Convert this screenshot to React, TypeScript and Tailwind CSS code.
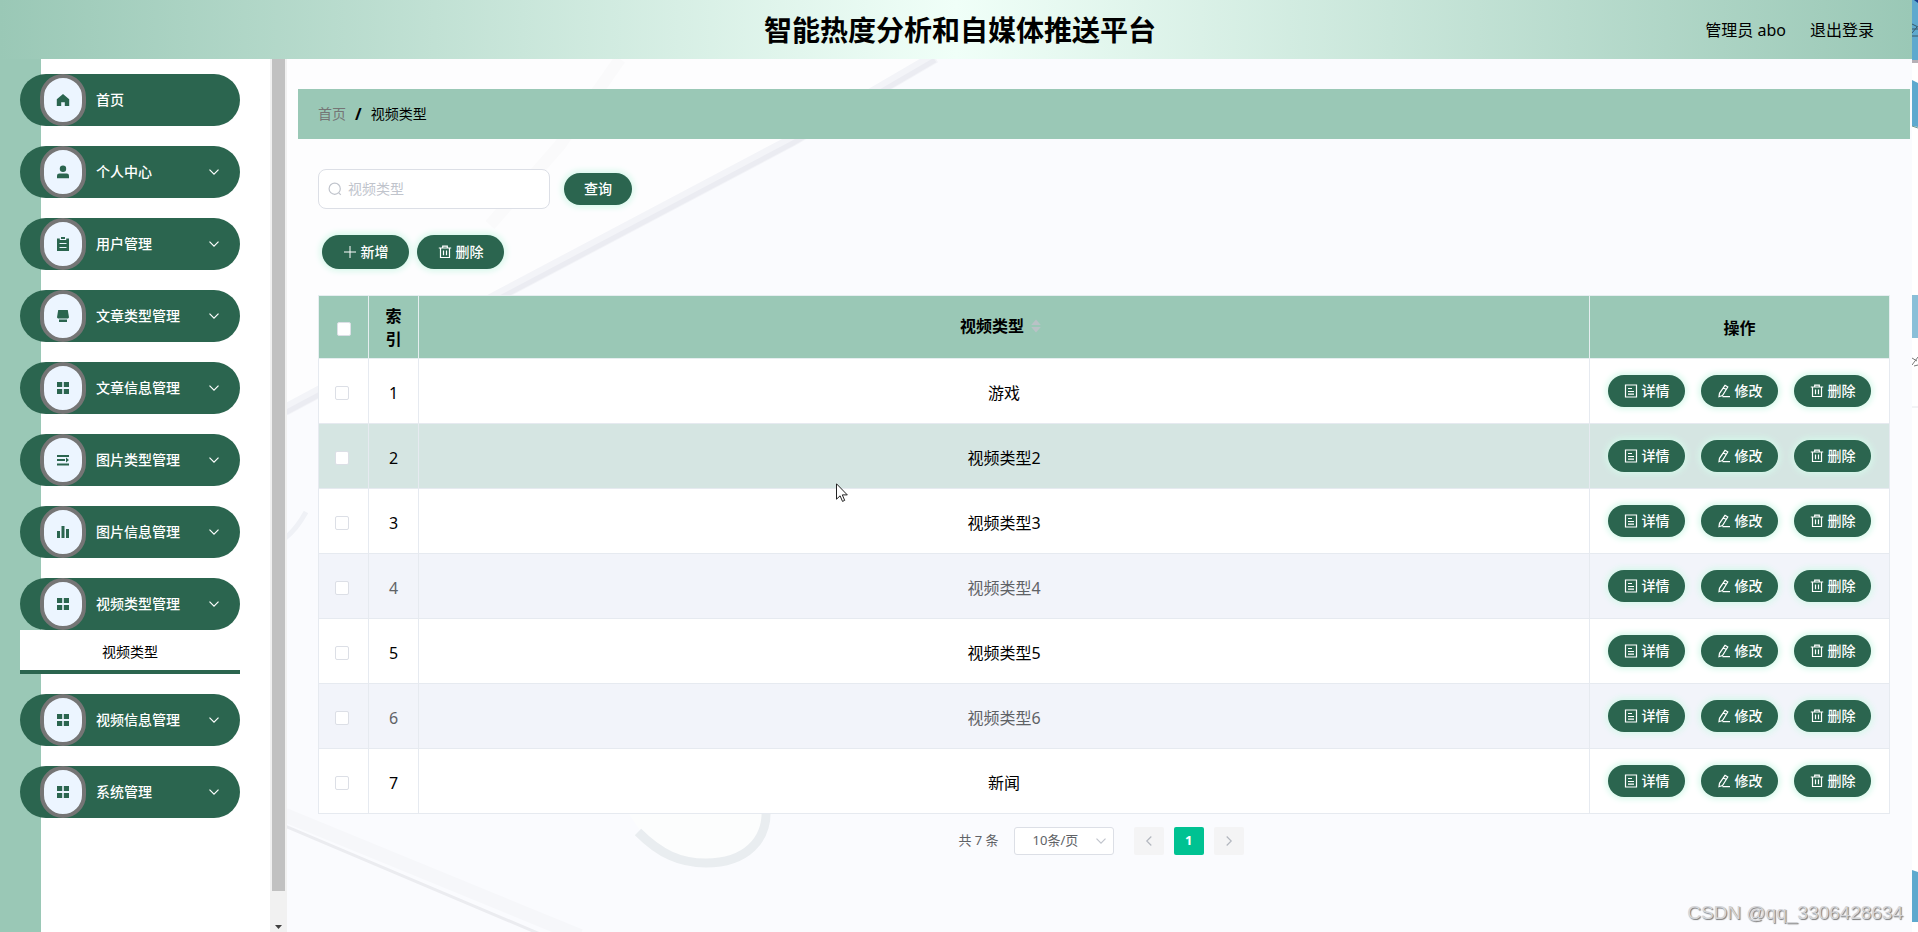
import { useState, type ReactNode } from "react";

type IconProps = { className?: string };

const HomeIcon = () => (
  <svg viewBox="0 0 14 14" className="h-[14px] w-[14px]" fill="currentColor" aria-hidden="true">
    <path d="M7 1 .8 6.2V13h4.4V9.2h3.6V13h4.4V6.2z" />
  </svg>
);
const UserIcon = () => (
  <svg viewBox="0 0 14 14" className="h-[14px] w-[14px]" fill="currentColor" aria-hidden="true">
    <circle cx="7" cy="3.8" r="3.2" />
    <path d="M1 13.2v-2.4A2.3 2.3 0 0 1 3.300 8.500h7.400A2.300 2.300 0 0 1 13 10.800v2.400z" />
  </svg>
);
const OrderIcon = () => (
  <svg viewBox="0 0 14 14" className="h-[14px] w-[14px]" aria-hidden="true">
    <path d="M1 1.500h2.800v1.500h6.400V1.500H13V14H1z" fill="currentColor" />
    <path d="M5 0h4v2H5z" fill="currentColor" />
    <path d="M3.500 6.500h7M3.500 10.500h7" stroke="#ecf5ff" strokeWidth="1" />
  </svg>
);
const TicketIcon = () => (
  <svg viewBox="0 0 14 14" className="h-[14px] w-[14px]" fill="currentColor" aria-hidden="true">
    <path d="M2.200 1h9.600l1.200 7.500-1 1H2l-1-1z" />
    <path d="M3 10.500h8V13H3z" />
  </svg>
);
const MenuIcon = () => (
  <svg viewBox="0 0 14 14" className="h-[14px] w-[14px]" fill="currentColor" aria-hidden="true">
    <path d="M1 1h5.200v5H1zM7.800 1H13v5H7.800zM1 8h5.200v5H1zM7.800 8H13v5H7.800z" />
  </svg>
);
const UnfoldIcon = () => (
  <svg viewBox="0 0 14 14" className="h-[14px] w-[14px]" fill="currentColor" aria-hidden="true">
    <path d="M1 2h12v2H1zM1 6h8v2H1zM1 10.500h12v2H1zM10 4.500 13 7l-3 2.500z" />
  </svg>
);
const DataIcon = () => (
  <svg viewBox="0 0 14 14" className="h-[14px] w-[14px]" fill="currentColor" aria-hidden="true">
    <path d="M1 6h3v7H1zM5.500 1h3v12h-3zM10 4h3v9h-3z" />
  </svg>
);
const ChevronIcon = ({ className }: IconProps) => (
  <svg viewBox="0 0 12 12" className={className} fill="none" stroke="currentColor" strokeWidth="1.200" aria-hidden="true">
    <path d="m1.500 3.700 4.500 4.500 4.500-4.500" />
  </svg>
);
const SearchIcon = ({ className }: IconProps) => (
  <svg viewBox="0 0 14 14" className={className} fill="none" stroke="currentColor" strokeWidth="1.200" aria-hidden="true">
    <circle cx="6.700" cy="6.700" r="5.600" />
    <path d="m10.800 10.800 2 2" />
  </svg>
);
const PlusIcon = () => (
  <svg viewBox="0 0 14 14" className="h-[14px] w-[14px]" stroke="currentColor" aria-hidden="true">
    <path d="M7 1v12M1 7h12" />
  </svg>
);
const TrashIcon = () => (
  <svg viewBox="0 0 14 14" className="h-[14px] w-[14px]" fill="none" stroke="currentColor" strokeWidth="1.200" aria-hidden="true">
    <path d="M.8 3h12.400M2.500 3v9.500h9V3M4.700 3V1.200h4.600V3M5.500 5.500v4.700M8.500 5.500v4.700" />
  </svg>
);
const DocIcon = () => (
  <svg viewBox="0 0 14 14" className="h-[14px] w-[14px]" fill="none" stroke="currentColor" strokeWidth="1.200" aria-hidden="true">
    <path d="M1.500 1h11v12h-11zM4 4.500h4M4 7.500h6M4 10.200h6" />
  </svg>
);
const EditIcon = () => (
  <svg viewBox="0 0 14 14" className="h-[14px] w-[14px]" fill="none" stroke="currentColor" strokeWidth="1.200" aria-hidden="true">
    <path d="M8 1.300 10.800 3 5.500 11.500 2 12.700l.5-3.400zM6.500 3.800 9.200 5.500M5.500 12.700H13" />
  </svg>
);

type MenuEntry = { label: string; icon: ReactNode; plain?: boolean; child?: string };

const menu: MenuEntry[] = [
  { label: "首页", icon: <HomeIcon />, plain: true },
  { label: "个人中心", icon: <UserIcon /> },
  { label: "用户管理", icon: <OrderIcon /> },
  { label: "文章类型管理", icon: <TicketIcon /> },
  { label: "文章信息管理", icon: <MenuIcon /> },
  { label: "图片类型管理", icon: <UnfoldIcon /> },
  { label: "图片信息管理", icon: <DataIcon /> },
  { label: "视频类型管理", icon: <MenuIcon />, child: "视频类型" },
  { label: "视频信息管理", icon: <MenuIcon /> },
  { label: "系统管理", icon: <MenuIcon /> },
];

const rows = ["游戏", "视频类型2", "视频类型3", "视频类型4", "视频类型5", "视频类型6", "新闻"];

function rowStyle(index: number) {
  if (index === 1) return "bg-[#d5e5e2] text-black";
  return index % 2 === 1 ? "bg-[#f2f4fa] text-[#606266]" : "bg-white text-black";
}

function PillButton({ icon, children, size }: { icon?: ReactNode; children: ReactNode; size: string }) {
  return (
    <button
      type="button"
      className={`flex items-center justify-center gap-1 rounded-full bg-[#2b654f] text-sm font-medium text-white shadow-[0_0_6px_2px_#d5f8ea] ${size}`}
    >
      {icon}
      {children}
    </button>
  );
}

function Sidebar() {
  return (
    <nav className="w-[270px] shrink-0 bg-[linear-gradient(to_right,#9ac8b6_41px,#ffffff_41px)] pt-[15px] pr-[30px] pl-5">
      <ul className="flex flex-col gap-5">
        {menu.map((item) => (
          <li key={item.label}>
            <a
              href="#"
              className="flex h-[52px] items-center rounded-full bg-[#2b654f] pr-5 pl-5 text-sm font-medium text-white"
            >
              <span className="flex h-[52px] w-[46px] items-center justify-center rounded-full border-4 border-[#757575] bg-[#ecf5ff] text-[#2b654f]">
                {item.icon}
              </span>
              <span className="flex-1 pl-[10px]">{item.label}</span>
              {!item.plain && <ChevronIcon className="h-3 w-3" />}
            </a>
            {item.child && (
              <a
                href="#"
                className="flex h-11 items-center justify-center border-b-4 border-[#2b654f] bg-white pt-[3px] text-sm text-black"
              >
                {item.child}
              </a>
            )}
          </li>
        ))}
      </ul>
    </nav>
  );
}

function ScrollTrack() {
  return (
    <div className="flex w-[17px] shrink-0 flex-col items-center bg-[#f1f1f1]">
      <div className="w-[13px] flex-1 bg-[#c1c1c1]" />
      <div className="flex h-[41px] items-end justify-center pb-[3px]">
        <svg viewBox="0 0 7 4" className="h-1 w-[7px]" fill="#404040" aria-hidden="true">
          <path d="M0 0h7L3.500 4z" />
        </svg>
      </div>
    </div>
  );
}

function Backdrop() {
  return (
    <svg
      viewBox="287 59 1625 873"
      preserveAspectRatio="xMinYMin slice"
      className="absolute inset-0 h-full w-full"
      fill="none"
      aria-hidden="true"
    >
      <path d="M287 59H935L793 140 500 295 287 405z" fill="#fdfdfe" />
      <path d="M935 57 793 140 500 295 285 410" stroke="#f3f4f8" strokeWidth="12" />
      <path d="M935 60 793 143 500 298 285 413" stroke="#ebecf2" strokeWidth="5" />
      <path d="M620 59 560 145 490 225" stroke="#fafafb" strokeWidth="12" />
      <path d="M285 538 Q296 530 306 512" stroke="#eff1f6" strokeWidth="5" />
      <path d="M285 815 580 936" stroke="#f6f7fa" strokeWidth="14" />
      <path d="M285 826 540 934" stroke="#ebecf0" strokeWidth="3" />
      <path d="M628 812C650 850 680 868 706 866 746 866 768 845 766 808" fill="#fcfdfd" />
      <path d="M638 832C660 854 680 863 706 863 746 863 768 840 766 808" stroke="#e9edf0" strokeWidth="9" />
    </svg>
  );
}

function EdgeStrip() {
  return (
    <div className="w-[6px] shrink-0 bg-white">
      <svg viewBox="0 0 6 932" className="w-full" aria-hidden="true">
        <path d="M0 0h6v60H0z" fill="#5ea9ce" />
        <path d="M2 0h4v3z" fill="#173f8f" />
        <path d="M0 24l6 3M0 29h6M0 33l5-6M0 36h6" stroke="#36586a" />
        <path d="M0 60h6v3H0z" fill="#b5b0b6" />
        <path d="M0 80l6 3v44l-6-1z" fill="#5ea9ce" />
        <path d="M0 126l6 2" stroke="#6f9a93" />
        <path d="M0 295h6v43H0z" fill="#8abfd8" />
        <path d="M0 358l5 3M6 357l-6 8M2 366l4-1" stroke="#777" />
        <path d="M0 407h6" stroke="#e5e8ec" />
        <path d="M0 870l6 2v50H0z" fill="#5ea9ce" />
      </svg>
    </div>
  );
}

function Content() {
  const [query, setQuery] = useState("");
  return (
    <main className="relative min-w-0 flex-1 bg-[#fafbfe]">
      <Backdrop />
      <div className="relative pt-[30px] pr-[2px] pl-[11px]">
        <ol className="flex h-[50px] items-center gap-[9px] bg-[#9ac8b6] pl-5 text-sm">
          <li>
            <a href="#" className="text-[#757575]">
              首页
            </a>
          </li>
          <li className="text-base font-bold">/</li>
          <li className="text-black">视频类型</li>
        </ol>

        <div className="pt-[30px] pr-5 pl-5">
          <form className="flex items-center gap-[14px]" onSubmit={(e) => e.preventDefault()}>
            <label className="flex h-10 w-[232px] items-center gap-[6px] rounded-lg border border-[#dcdfe6] bg-white px-[9px]">
              <SearchIcon className="h-[14px] w-[14px] shrink-0 text-[#c0c4cc]" />
              <input
                type="text"
                aria-label="视频类型"
                placeholder="视频类型"
                value={query}
                onChange={(e) => setQuery(e.target.value)}
                className="w-full min-w-0 text-sm outline-none placeholder:text-[#c0c4cc]"
              />
            </label>
            <PillButton size="h-8 w-[68px]">查询</PillButton>
          </form>

          <div className="flex gap-2 pt-[26px] pl-1">
            <PillButton size="h-[34px] w-[87px]" icon={<PlusIcon />}>
              新增
            </PillButton>
            <PillButton size="h-[34px] w-[87px]" icon={<TrashIcon />}>
              删除
            </PillButton>
          </div>

          <table className="mt-[26px] w-full table-fixed border-collapse text-center text-base [&_td]:border [&_td]:border-[#e6eaf0] [&_th]:border [&_th]:border-[#e6eef0]">
            <colgroup>
              <col className="w-[50px]" />
              <col className="w-[50px]" />
              <col />
              <col className="w-[300px]" />
            </colgroup>
            <thead className="bg-[#9ac8b6] text-black">
              <tr className="h-[63px]">
                <th>
                  <input
                    type="checkbox"
                    aria-label="全选"
                    className="mx-auto mt-1 block h-[14px] w-[14px] appearance-none rounded-xs border border-[#dcdfe6] bg-white"
                  />
                </th>
                <th className="px-[10px] pt-[2px] leading-[23px] font-bold">索引</th>
                <th className="font-bold">
                  <span className="inline-flex items-center pb-[2px]">
                    视频类型
                    <svg viewBox="0 0 24 14" className="h-[14px] w-6" fill="#b9c2c6" aria-hidden="true">
                      <path d="M12 .5 16.800 6H7.200zM7.200 8h9.600L12 13.500z" />
                    </svg>
                  </span>
                </th>
                <th className="pt-[2px] font-bold">操作</th>
              </tr>
            </thead>
            <tbody>
              {rows.map((name, index) => (
                <tr key={name} className={`h-[65px] ${rowStyle(index)}`}>
                  <td className="pr-1">
                    <input
                      type="checkbox"
                      aria-label={name}
                      className="mx-auto mt-1 block h-[14px] w-[14px] appearance-none rounded-xs border border-[#dcdfe6] bg-white"
                    />
                  </td>
                  <td className="pt-1">{index + 1}</td>
                  <td className="pt-1">{name}</td>
                  <td>
                    <div className="flex justify-center gap-4">
                      <PillButton size="h-8 w-[77px]" icon={<DocIcon />}>
                        详情
                      </PillButton>
                      <PillButton size="h-8 w-[77px]" icon={<EditIcon />}>
                        修改
                      </PillButton>
                      <PillButton size="h-8 w-[77px]" icon={<TrashIcon />}>
                        删除
                      </PillButton>
                    </div>
                  </td>
                </tr>
              ))}
            </tbody>
          </table>

          <div className="flex items-center justify-center pt-[13px] pr-[6px] text-[13px] text-[#606266]">
            <span>共 7 条</span>
            <div className="relative ml-[15px]">
              <select
                aria-label="每页条数"
                className="h-7 w-[100px] appearance-none rounded-[3px] border border-[#dcdfe6] bg-white pl-[18px] text-[13px] text-[#606266]"
              >
                <option>10条/页</option>
              </select>
              <ChevronIcon className="pointer-events-none absolute top-2 right-[7px] h-3 w-3 text-[#c0c4cc]" />
            </div>
            <div className="ml-5 flex gap-[10px] font-bold">
              <button
                type="button"
                aria-label="上一页"
                className="flex h-7 w-[30px] items-center justify-center rounded-[2px] bg-[#f4f4f5] text-[#b4b8c0]"
              >
                <ChevronIcon className="h-3 w-3 rotate-90" />
              </button>
              <button type="button" className="h-7 w-[30px] rounded-[2px] bg-[#00c292] text-white">
                1
              </button>
              <button
                type="button"
                aria-label="下一页"
                className="flex h-7 w-[30px] items-center justify-center rounded-[2px] bg-[#f4f4f5] text-[#b4b8c0]"
              >
                <ChevronIcon className="h-3 w-3 -rotate-90" />
              </button>
            </div>
          </div>
        </div>
      </div>

      <svg
        viewBox="0 0 12 20"
        className="pointer-events-none absolute top-[424px] left-[549px] h-5 w-3"
        fill="#fff"
        stroke="#222"
        aria-hidden="true"
      >
        <path d="M.5.800v15.400l3.600-3.400 2.400 5.600 2.200-1-2.400-5.500h5z" />
      </svg>
      <p className="pointer-events-none absolute right-[9px] bottom-[7px] font-['Liberation_Sans',sans-serif] text-[19px] leading-6 text-[#d4d5d8] [text-shadow:1px_1px_1px_#777]">
        CSDN @qq_3306428634
      </p>
    </main>
  );
}

export default function App() {
  return (
    <div className="flex min-h-screen bg-white font-['Noto_Sans','Noto_Sans_CJK_SC',sans-serif] text-black">
      <div className="flex min-w-0 flex-1 flex-col">
        <header className="grid h-[59px] grid-cols-[1fr_auto_1fr] items-center bg-[linear-gradient(to_right,#9ac8b6,#f0fff8,#9ac8b6)]">
          <h1 className="col-start-2 pl-2 text-[28px] leading-9 font-bold">智能热度分析和自媒体推送平台</h1>
          <div className="flex justify-end gap-6 pr-[38px] text-base">
            <span>管理员 abo</span>
            <a href="#">退出登录</a>
          </div>
        </header>
        <div className="flex flex-1">
          <Sidebar />
          <ScrollTrack />
          <Content />
        </div>
      </div>
      <EdgeStrip />
    </div>
  );
}
